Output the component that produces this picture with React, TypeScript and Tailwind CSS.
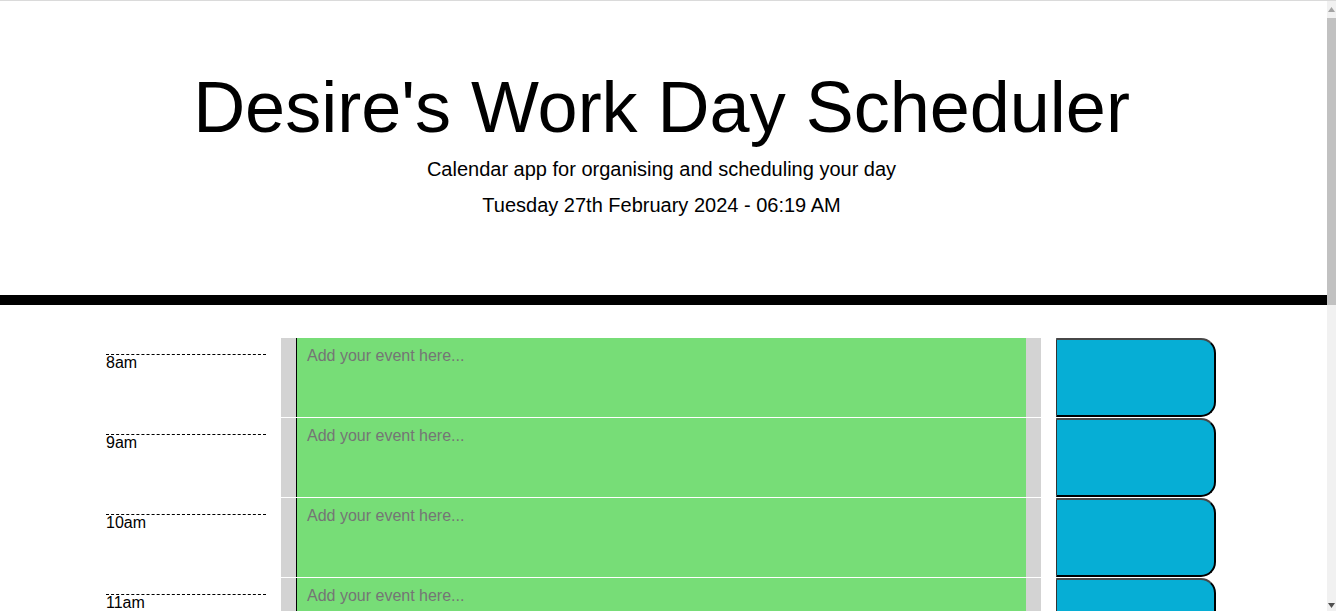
import React from 'react';

const hours = ['8am', '9am', '10am', '11am', '12pm', '1pm', '2pm', '3pm', '4pm', '5pm'];

const TimeRow: React.FC<{ label: string }> = ({ label }) => {
  return (
    <div className="flex h-[80px] border-t border-white">
      {/* hour */}
      <div className="w-[190px] px-[15px]">
        <div className="mt-[16px] border-t border-dashed border-black text-[16px] leading-none text-black">
          {label}
        </div>
      </div>

      {/* event text */}
      <div className="w-[760px] bg-[#d3d3d3] px-[15px]">
        <textarea
          className="block h-full w-full resize-none border-l border-black bg-[#77dd77] pl-[10px] pt-[6px] text-[16px] text-black outline-none placeholder:text-[#757575]"
          placeholder="Add your event here..."
        />
      </div>

      {/* save */}
      <div className="w-[190px] px-[15px]">
        <button className="h-full w-full rounded-r-[15px] border-t-2 border-r-2 border-b-2 border-l border-black border-t-[#474747] border-l-[#333333] bg-[#06aed5]" />
      </div>
    </div>
  );
};

// page scroll track on the right edge
const ScrollTrack = () => (
  <div className="sticky top-0 flex h-screen w-[9px] shrink-0 flex-col items-center bg-[#f1f1f1]">
    <svg width="7" height="5" viewBox="0 0 7 5" className="mt-[6px]">
      <path d="M0 5 L3.5 0 L7 5 Z" fill="#a3a3a3" />
    </svg>
    <div className="mt-[6px] h-[287px] w-full bg-[#c1c1c1]" />
    <div className="flex-1" />
    <svg width="7" height="5" viewBox="0 0 7 5" className="mb-[4px]">
      <path d="M0 0 L7 0 L3.5 5 Z" fill="#505050" />
    </svg>
  </div>
);

export default function App() {
  return (
    <div className="flex min-h-screen border-t border-t-[#dadada] bg-white font-['Liberation_Sans',Arial,sans-serif] text-black">
      <div className="flex-1">
        <header className="border-b-[10px] border-b-black pt-[63px] pr-[4px] pb-[75px] text-center">
          <h1 className="text-[72px] leading-[86px]">Desire's Work Day Scheduler</h1>
          <p className="mt-[4px] text-[20px] leading-[30px]">
            Calendar app for organising and scheduling your day
          </p>
          <p className="mt-[6px] text-[20px] leading-[30px]">Tuesday 27th February 2024 - 06:19 AM</p>
        </header>

        <main className="mt-[32px] mb-[40px] ml-[91px] w-[1140px]">
          {hours.map(h => (
            <TimeRow key={h} label={h} />
          ))}
        </main>
      </div>
      <ScrollTrack />
    </div>
  );
}
